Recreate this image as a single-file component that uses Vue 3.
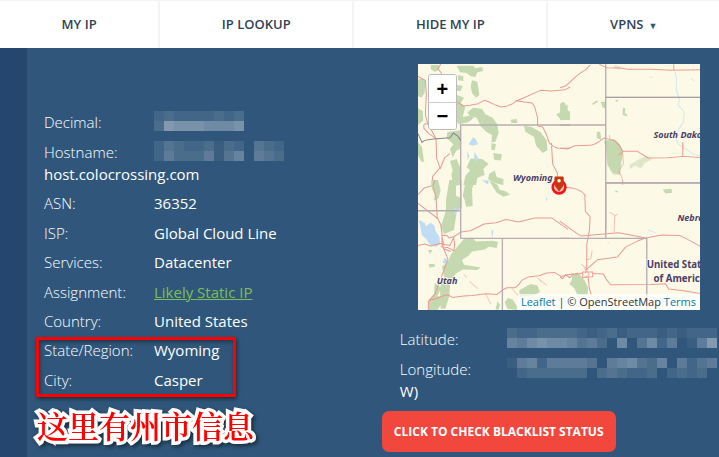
<template>
  <div class="page">
    <nav class="nav">
      <a v-for="item in menu" :key="item.label" href="#" class="nav__item">
        {{ item.label }}<span v-if="item.dropdown" class="nav__caret">▼</span>
      </a>
    </nav>

    <main class="details">
      <section class="details__info">
        <dl class="facts">
          <div v-for="row in network" :key="row.label" class="facts__row">
            <dt>{{ row.label }}:</dt>
            <dd>
              <span v-if="row.mask" class="mask">
                <span v-for="(line, l) in row.mask" :key="l" class="mask__line">
                  <i v-for="(cell, c) in line" :key="c" :style="{ opacity: cell * 0.05 }"></i>
                </span>
              </span>
              <a v-if="row.link" href="#">{{ row.value }}</a>
              <template v-else>{{ row.value }}</template>
            </dd>
          </div>
        </dl>
        <div class="marked">
          <dl class="facts">
            <div v-for="row in place" :key="row.label" class="facts__row">
              <dt>{{ row.label }}:</dt>
              <dd>{{ row.value }}</dd>
            </div>
          </dl>
          <p class="marked__note">这里有州市信息</p>
        </div>
      </section>

      <section class="details__location">
        <div class="map">
          <svg class="map__tiles" viewBox="0 0 846 738" aria-label="Map of Wyoming">
            <rect width="846" height="738" fill="#fcfae6" />

            <g transform="translate(-24 -27)">
              <g class="forest">
                <path d="M24 74l12-6 10 10-2 36-10 14-10-6zM24 160l14 8 2 28-16 14zM24 262l12 14 6 44-8 0-10-20zM62 30l24 0 2 14-14 6-12-8zM140 32l50 0 6 8 20-4 4 12-18 4-6 14-14-2-12-10-20-2zM186 76l16 4 6 40-10 8-12-14-4-20zM144 60l16 4 0 14-16-2zM140 90l18 2-6 16-12 0zM142 120l20 8-10 16 14 12-8 30 20-4 14 6-18 14-28 6-14-20 10-30-8-16zM172 172l18-14 26 4 10 16 22 10 14 20 4 26-10 26-12 2 2-22-18-10-16-16-12-26-20-4zM302 194l18-2 2 12-18 0zM342 212l22 4 26 14 20 26 2 30-14 8-20-22-6-26-26-16zM454 146l10-4 8 24 8 4 0 24-30-2-12-14 16-8zM112 232l38-6 2 54-14 8-10 20-8-26 10-14-20-18zM182 310l34 2 20 14-16 16 4 18-22 8-4 22-38 0 6-28 14-16-10-10zM250 294l26 4-4 18-20-2zM244 264l14 4-4 18-10-2zM120 318l20-6 10 24 0 54-20 0-6-30 4-14zM238 356l16-10 6 20 20 6 0 18-26-6-20-12z" />
              </g>
              <g class="water">
                <path d="M190 246l8 8 6 14-16 4-12-4zM172 288l6 16-6 12zM194 292l12 20-8 8-6-14zM216 376l20 0-2 12z" />
              </g>
              <g class="road">
                <path d="M24 64l22 12 3 42-3 62 8 28 20 35 4 12M92 28l-8 14 10 12 0 30M140 140l20 13 20-2 24-5 18-10 14 4 16 8 20 8 16-2 20-8 10-8 22-9 44-20 8-3 32 2 42-4 14-8M316 137l50 7 8 12 9 34-1 22 16 4 10 20 10 28 12 10 12 5 38 1M54 208q-16-6-12 12l14 16 22 14 2 60 10 28-22 26-2 26M90 342l14-34 16-12M424 264l4 64 14 26 0 20" />
              </g>
              <g class="border"><path d="M152 460V210H480" /></g>
              <path class="border border--dark" d="M24 236l12 26 8-6 26-4 50-4 10-14 14 10 8 12" />
            </g>

            <g transform="translate(426 -27)">
              <g class="forest">
                <path d="M0 146l10-6 4 16 8-8 2 34 6 12-30 2zM96 146l14-10 4 4-16 10zM122 140l14 0 2 20-10-2zM188 158l8 2-2 14 8 6-2 4-12-4zM164 136l12-2-6 8zM110 230l10 0 4 24-14-4zM132 258l30-6 16 14 12 24-6 30-4 40-22-8-16-22-4-42z" />
                <path opacity=".55" d="M164 30l18 6-4 8-16-4zM208 330l30-18 20-8 20 8-24 12-12 16-16-8-16 10zM146 340l20 10 12 8-18 2z" />
              </g>
              <path class="river" d="M344 50l6 26-2 28 10 28-4 18 18 20-2 32-14 20-8 30 8 16 24 16 20 14 20 4M370 268v18M394 70l8 8M266 67h12" />
              <g class="road">
                <path d="M0 98l18-6 30-28 16-12 14-9 12-13M118 28l22 10 40 1 22 4 70 0 60 3 90-2M341 28v18M0 280l22 2 22-10 46-1 14-4 14-8 14-10 16 4 16 4 16 18 8 14 44 0 32 20 60-1 46-4 62 4M188 290l-14 10M368 262v42" />
                <path opacity=".6" d="M188 294l2 32-14 22 10 20 2 22M148 240l2 14" />
              </g>
              <path class="border" d="M137 28V525M137 384H426M0 210H137" />
              <path class="border border--dark" d="M137 127H426" />
            </g>

            <g transform="translate(-24 348)">
              <g class="forest">
                <path d="M64 0l20 0 8 30-6 24-14 8 2-20-8-16zM118 0l34 0-4 14-10 4 0 30 16 6 0 28-14 12-8 56-30 12-10-22 8-24 8-26 0-30zM168 0l26 0-8 28 2 50-20 2-4-20-6-12zM236 0l26 14 6 14 20 6 12 10-20 6-20-12zM160 178l26-6 12 12 50-2 16 4-4 18-24-4-12 8-38 6-10 12-20 14 6 14 50 8-10 8-44-2-22 14-16 32-2 34-12 38-14 0-2-64 12-32-6-30 18-16 8-20zM54 210l14 0-8 12zM56 252h18l0 8-16 2zM74 308l20 16-12 24 20 6-10 20-10 16-28 0 4-30 14-18zM294 354l14 4 12 20 0 12-28-4-8-20zM328 330l34-18 20 4 8 20-20 10-42 4zM262 364l8 10-4 14-10 0z" />
              </g>
              <g class="water">
                <path d="M26 120l18 8 4 10 14-10 12 10 2 14 12 18 2 20-10 10-20-6-14-20-10-8-4-20zM104 232l8 8-2 12-12-4zM132 82l8 0-2 22-6-4zM406 46l6 10-2 10zM244 148l6 4-4 26z" />
              </g>
              <g class="road">
                <path d="M24 44l18-20 28-8 4-16M70 22l8 30 4 64M24 70l60 46 8 18 4 28 0 32 18 44-16 42-22 60-21 24 0 30M24 196l20-4 18 6 28-8 30 6 12-26 20-14 30-4 40-20 36-4 30-10 36 8 50-12 52 0 48 34M94 166l16 0 8 8 12-4 4 20-2 22-20-10-20-2M96 170l6 28M102 206l20 8M55 362l30-8 6-4 22-6 14 8 34-4 26-2 40-5 34 2 18-14 12-6 24 0 10-8 10-14 18-10 34-4 22-8 24-2 20 12 16-4 10 8 8-8 18-6" />
                <path opacity=".5" d="M162 284l8 8M178 304l26 22M228 342l14 30M306 326l18 20M384 294l10 12M390 300l20 16" />
              </g>
              <path class="border" d="M24 92h130M152 175H480M277 175v215M152 0V175" />
            </g>

            <g transform="translate(426 348)">
              <g class="forest">
                <path d="M308 28l26-2 2 12-20 2zM162 32l12 0-2 6zM34 278l26 6 14 18 10 20-2 22-30 0-10-20-14-12 8-14zM220 384l12 0 0 6-14-4z" />
              </g>
              <path class="river" d="M264 150l22 8M76 42l4 10M142 190l8-4" />
              <g class="road">
                <path d="M0 22q56-2 74 22l2 50 14 16-2 40-8 44 0 70M0 124l20 14 30 22 14 8 86-8 26-2 50 10 30 6 50-9 52 1 36 18 32 18 20 0M252 175l-20 8-36 18-24 30-60 8-36 32M0 290l8 6 8-12 40-2 12-4M68 276l30 0 0 14-30 2zM98 280l32 2 10 18 12 14 120-1 44-2 10 16 40 4 54 9" />
                <path d="M84 290l4 36 6 20" />
                <path opacity=".6" d="M162 158l2-52-16-10M164 108l8-6M188 0v8M76 240l16-4 4-24M64 252l20 18M80 256l-4 24M72 264l16 20-18 10" />
              </g>
              <path class="border" d="M137 8H426M137 8V175" />
              <path class="border" d="M0 175H260V390" />
            </g>

            <g class="map__state">
              <text x="285" y="352">Wyoming</text>
              <text x="706" y="223">South Dakota</text>
              <text x="778" y="472">Nebraska</text>
              <text x="56" y="661">Utah</text>
            </g>
            <g class="map__country">
              <text x="686" y="611">United States</text>
              <text x="706" y="655">of America</text>
            </g>

            <g transform="translate(423 369)">
              <circle r="19" fill="#fbc3b8" stroke="#f0161b" stroke-width="8" />
              <path d="M-14-28q0-4 4-4h20q4 0 4 4v18q0 6-5 11L0 14l-9-13q-5-5-5-11z" fill="#cb3510" />
              <circle cy="-19" r="5" fill="#fff" />
            </g>
          </svg>
          <div class="map__zoom">
            <button type="button" aria-label="Zoom in">+</button>
            <button type="button" aria-label="Zoom out">−</button>
          </div>
          <div class="map__credit"><a href="#">Leaflet</a> | © OpenStreetMap <a href="#">Terms</a></div>
        </div>

        <dl class="facts facts--coords">
          <div v-for="row in coords" :key="row.label" class="facts__row">
            <dt>{{ row.label }}:</dt>
            <dd>
              <span class="mask">
                <span v-for="(line, l) in row.mask" :key="l" class="mask__line">
                  <i v-for="(cell, c) in line" :key="c" :style="{ opacity: cell * 0.05 }"></i>
                </span>
              </span>
              {{ row.value }}
            </dd>
          </div>
        </dl>
        <button type="button" class="blacklist">CLICK TO CHECK BLACKLIST STATUS</button>
      </section>
    </main>
  </div>
</template>

<script setup>
const menu = [
  { label: 'MY IP' },
  { label: 'IP LOOKUP' },
  { label: 'HIDE MY IP' },
  { label: 'VPNS', dropdown: true },
];

// each digit is the brightness of one block in the hidden value
const mask = (...lines) => lines.map((line) => line.split('').map(Number));

const network = [
  { label: 'Decimal', mask: mask('232222323', '398887778') },
  { label: 'Hostname', mask: mask('2432231320432', '2533351460543'), value: 'host.colocrossing.com' },
  { label: 'ASN', value: '36352' },
  { label: 'ISP', value: 'Global Cloud Line' },
  { label: 'Services', value: 'Datacenter' },
  { label: 'Assignment', value: 'Likely Static IP', link: true },
  { label: 'Country', value: 'United States' },
];

const place = [
  { label: 'State/Region', value: 'Wyoming' },
  { label: 'City', value: 'Casper' },
];

const coords = [
  { label: 'Latitude', mask: mask('322333321231222121222', '657877645307047250159') },
  { label: 'Longitude', mask: mask('156255554056743605245', '023333330343223023230'), value: 'W)' },
];
</script>

<style>
body {
  margin: 0;
}
</style>

<style scoped>
.page {
  min-height: 100vh;
  display: flex;
  flex-direction: column;
  font-family: "Open Sans", "Noto Sans", sans-serif;
  font-size: 15px;
  line-height: 22px;
  color: #fff;
  background: #24466f;
  overflow-x: hidden;
}

.nav {
  display: flex;
  background: #fff;
  border-top: 1px solid #f3f5f5;
}

.nav__item {
  flex: 1 1 auto;
  padding: 12px 0 13px;
  border-right: 2px solid #f1f4f4;
  color: #2f4354;
  font-size: 13px;
  font-weight: 600;
  line-height: 22px;
  text-align: center;
  text-decoration: none;
}

.nav__item:last-child {
  border-right: 0;
}

.nav__caret {
  margin-left: 5px;
  color: #30577b;
  font-size: 9px;
  line-height: 1;
}

.details {
  flex: 1;
  display: grid;
  grid-template-columns: 20fr 19fr;
  margin-left: 27px;
  background: #30577b;
}

.details__info {
  padding: 63px 0 0 17px;
}

.details__location {
  padding-top: 16px;
}

.facts {
  display: flex;
  flex-direction: column;
  gap: 7px;
  margin: 0;
}

.facts__row:nth-child(even) {
  padding-top: 1px;
}

.facts dt {
  display: inline-block;
  width: 110px;
  font-weight: 300;
}

.facts dd {
  display: inline;
  margin: 0;
  font-weight: 500;
}

.facts dd a {
  color: #7cbf56;
}

.facts--coords {
  margin: 18px 0 9px 18px;
}

.facts--coords dt {
  width: 107px;
}

.mask {
  display: inline-block;
  vertical-align: top;
}

.mask__line {
  display: flex;
}

.mask__line i {
  width: 10px;
  height: 10px;
  background: #e6ebf2;
}

.marked {
  position: relative;
  margin-top: 7px;
}

.marked::after {
  content: "";
  position: absolute;
  top: -2px;
  left: -8px;
  width: 194px;
  height: 54px;
  border: 3px solid #f00;
  box-shadow: 1px 2px 4px rgba(0, 0, 0, 0.5), inset 1px 2px 4px rgba(0, 0, 0, 0.4);
}

.marked__note {
  position: absolute;
  top: 64px;
  left: -7px;
  margin: 0;
  color: #f00;
  font-family: "Noto Serif CJK SC", "Noto Sans CJK SC", serif;
  font-size: 31px;
  font-weight: 600;
  line-height: 44px;
  white-space: nowrap;
  -webkit-text-stroke: 7px #fff;
  paint-order: stroke fill;
  stroke-linejoin: round;
  filter: drop-shadow(2px 2px 2px rgba(0, 0, 0, 0.5));
}

.map {
  position: relative;
  margin: 0 19px 0 36px;
  overflow: hidden;
}

.map__tiles {
  display: block;
  width: 100%;
}

.forest {
  fill: #c5d9b0;
}

.water {
  fill: #bfdcf2;
}

.river {
  fill: none;
  stroke: #d3e6f0;
  stroke-width: 3;
}

.road {
  fill: none;
  stroke: #eb9a92;
  stroke-width: 3;
  stroke-linejoin: round;
}

.border {
  fill: none;
  stroke: #b5adb3;
  stroke-width: 4;
}

.border--dark {
  stroke: #8d8090;
  stroke-width: 3;
}

.map__state,
.map__country {
  fill: #4d3d68;
  stroke: #fcfae6;
  stroke-width: 5;
  paint-order: stroke;
  font-family: "Noto Sans", sans-serif;
  font-size: 27px;
  font-weight: 700;
}

.map__state {
  font-style: italic;
}

.map__country {
  font-size: 29px;
}

.map__zoom {
  position: absolute;
  top: 10px;
  left: 10px;
  display: flex;
  flex-direction: column;
  border: 1px solid #bbb;
  border-radius: 3px;
  overflow: hidden;
}

.map__zoom button {
  width: 27px;
  height: 27px;
  padding: 0;
  border: 0;
  background: #fff;
  color: #000;
  font: bold 20px/26px "Liberation Sans", sans-serif;
}

.map__zoom button + button {
  border-top: 1px solid #ccc;
}

.map__credit {
  position: absolute;
  right: 0;
  bottom: 0;
  padding: 0 4px 0 3px;
  background: rgba(255, 255, 255, 0.7);
  color: #333;
  font-size: 11px;
  line-height: 16px;
  white-space: nowrap;
}

.map__credit a {
  color: #0078a8;
  text-decoration: none;
}

.blacklist {
  padding: 0 12px;
  border: 0;
  border-radius: 7px;
  background: #f2473d;
  color: #fff;
  font-family: inherit;
  font-size: 12px;
  font-weight: 700;
  line-height: 41px;
  white-space: nowrap;
}
</style>
